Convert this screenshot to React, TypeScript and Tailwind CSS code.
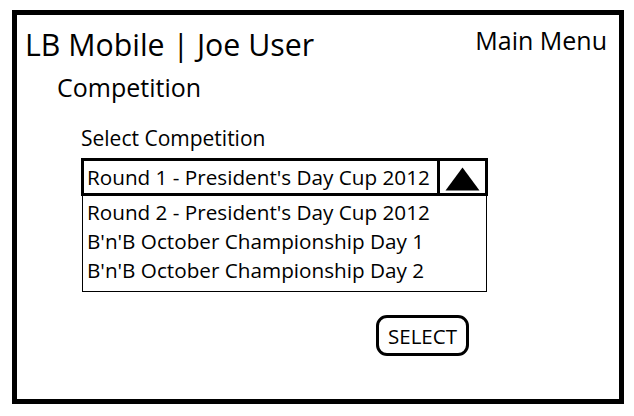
import React from "react";

export default function App() {
  const items = [
    "Round 2 - President's Day Cup 2012",
    "B'n'B October Championship Day 1",
    "B'n'B October Championship Day 2",
  ];
  return (
    <div
      className="w-[634px] h-[416px] bg-white pl-[12px] pt-[10px] text-black"
      style={{ fontFamily: '"Open Sans", "Noto Sans", sans-serif' }}
    >
      <div className="w-[612px] h-[394px] border-[5px] border-black flex flex-col">
        <div className="flex justify-between items-start h-[47px]">
          <div className="pl-[8px] pt-[12px] text-[30.3px] leading-[36px] whitespace-nowrap">LB Mobile | Joe User</div>
          <div className="pr-[12px] pt-[9px] text-[25px] leading-[32px] whitespace-nowrap">Main Menu</div>
        </div>
        <div className="pl-[40px] pt-[9px] text-[25px] leading-[32px]">Competition</div>
        <div className="pl-[64px] pt-[21px] text-[21px] leading-[28px]">Select Competition</div>
        <div className="ml-[64px] mt-[6px] w-[407px] flex flex-col">
          <div className="h-[38px] border-[3px] border-black flex">
            <div className="flex-1 pl-[3px] pt-[1px] text-[20.7px] leading-[31px] whitespace-nowrap">
              Round 1 - President's Day Cup 2012
            </div>
            <div className="w-[48px] border-l-[3px] border-black flex items-end justify-center pb-[2px]">
              <svg width="35" height="24" viewBox="0 0 35 24">
                <polygon points="17.5,0.5 34.5,23.5 0.5,23.5" fill="black" />
              </svg>
            </div>
          </div>
          <div className="ml-[1px] w-[405px] h-[96px] border border-t-0 border-black pl-[4px] pt-[2px]">
            {items.map((t) => (
              <div key={t} className="text-[20.7px] leading-[29px] whitespace-nowrap">
                {t}
              </div>
            ))}
          </div>
        </div>
        <div className="flex justify-end pr-[150px] pt-[23px]">
          <div className="w-[93px] h-[41px] border-[3px] border-black rounded-[11px] flex items-center justify-center text-[20.5px] leading-[28px]">
            SELECT
          </div>
        </div>
      </div>
    </div>
  );
}
